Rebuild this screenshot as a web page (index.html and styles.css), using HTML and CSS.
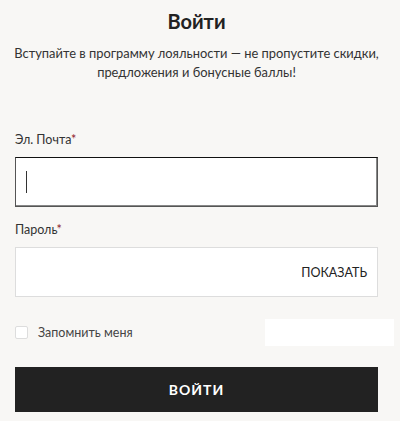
FILE: index.html
```html
<!DOCTYPE html>
<html lang="ru">
<head>
    <meta charset="UTF-8">
    <meta name="viewport" content="width=device-width, initial-scale=1.0">
    <title>Войти</title>
    <link rel="stylesheet" href="styles.css">
</head>
<body>
    <div class="login">
        <h1 class="login-title">Войти</h1>
        <p class="login-intro">Вступайте в программу лояльности — не пропустите скидки,<br>предложения и бонусные баллы!</p>

        <form class="login-form">
            <label class="field-label" for="email">Эл. Почта<span class="req">*</span></label>
            <div class="field field-active">
                <span class="caret"></span>
                <input id="email" type="email">
            </div>

            <label class="field-label" for="password">Пароль<span class="req">*</span></label>
            <div class="field">
                <input id="password" type="password">
                <span class="show-pass">ПОКАЗАТЬ</span>
            </div>

            <div class="remember-row">
                <label class="remember">
                    <span class="checkbox"></span>
                    Запомнить меня
                </label>
                <div class="captcha-slot"></div>
            </div>

            <button type="button" class="submit">ВОЙТИ</button>
        </form>
    </div>
</body>
</html>
```

FILE: styles.css
```css
body {
    margin: 0;
    background-color: #f8f7f5;
    font-family: Lato, "Noto Sans", sans-serif;
    color: #222;
}

.login {
    width: 363px;
    margin-left: 15px;
    padding-top: 9px;
}

.login-title {
    margin: 0;
    font-size: 20px;
    line-height: 24px;
    font-weight: 700;
    text-align: center;
}

.login-intro {
    margin: 11px -4px 0;
    font-size: 12.9px;
    line-height: 19px;
    text-align: center;
    white-space: nowrap;
    color: #333;
}

.login-form {
    display: flex;
    flex-direction: column;
    margin-top: 50px;
}

.field-label {
    font-size: 12.5px;
    line-height: 16px;
    color: #333;
}

.req {
    color: #8e1a2c;
}

.field {
    display: flex;
    align-items: center;
    height: 50px;
    box-sizing: border-box;
    margin: 9px 0 15px;
    background-color: #fff;
    border: 1px solid #ddd;
}

.field-active {
    border: 1px solid #555;
    border-top-color: #111;
    box-shadow: inset -1px -1px 0 #888;
}

.field input {
    flex: 1;
    min-width: 0;
    height: 100%;
    border: none;
    outline: none;
    background: transparent;
    padding: 0 10px;
    font: inherit;
}

.caret {
    width: 1px;
    height: 22px;
    margin-left: 10px;
    background-color: #333;
}

.field-active input {
    padding-left: 0;
}

.show-pass {
    padding-right: 10px;
    font-size: 12.5px;
    color: #222;
}

.remember-row {
    display: flex;
    align-items: center;
    justify-content: space-between;
    margin-top: 7px;
    margin-right: -16px;
}

.remember {
    display: flex;
    align-items: center;
    gap: 10px;
    font-size: 12.5px;
    color: #444;
}

.checkbox {
    width: 11px;
    height: 11px;
    background-color: #fff;
    border: 1px solid #ddd;
    border-radius: 2px;
}

.captcha-slot {
    width: 129px;
    height: 27px;
    background-color: #fff;
}

.submit {
    height: 45px;
    margin-top: 21px;
    border: none;
    background-color: #222;
    color: #fff;
    font: inherit;
    font-size: 14px;
    font-weight: 700;
    letter-spacing: 1px;
    cursor: pointer;
}
```
